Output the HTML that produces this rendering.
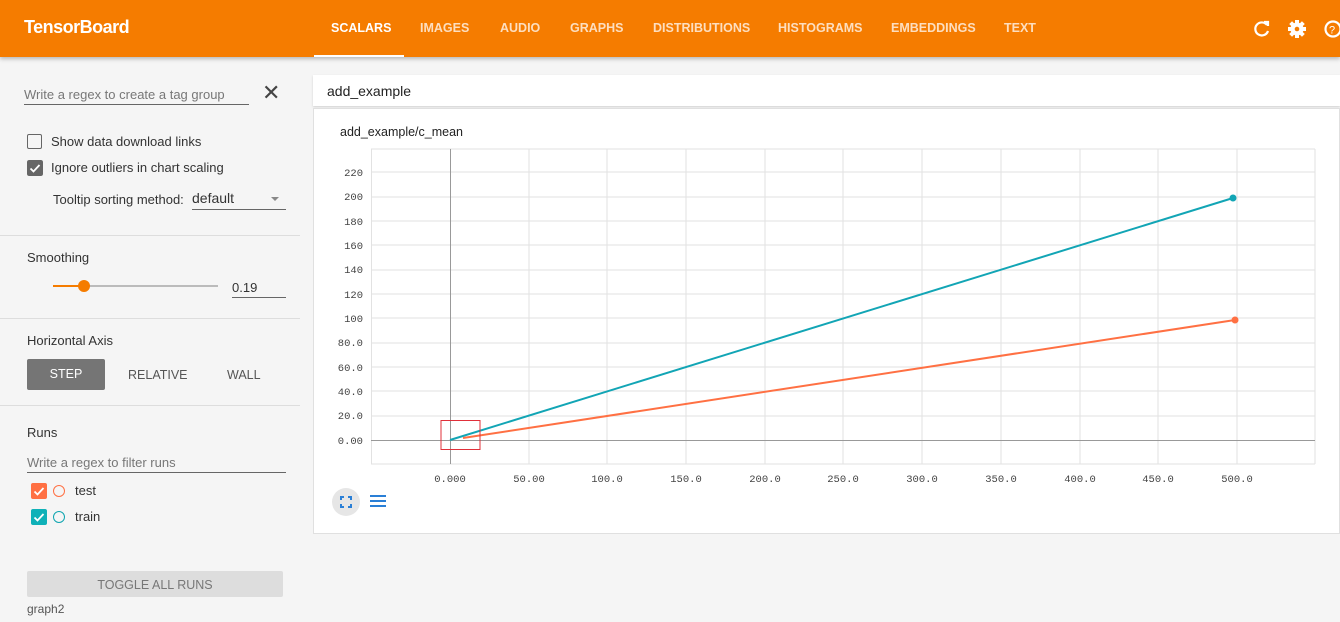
<!DOCTYPE html>
<html><head><meta charset="utf-8"><style>
body{margin:0;width:1340px;height:622px;overflow:hidden;background:#f5f5f5;font-family:"Liberation Sans",sans-serif;position:relative}
.hdr{position:absolute;left:0;top:0;width:1340px;height:57px;background:#f57c00;box-shadow:0 2px 4px rgba(0,0,0,.25)}
.hdr .t{position:absolute;left:24px;top:17px;color:#fff;font-size:18px;font-weight:bold;letter-spacing:-.5px}
.tab{position:absolute;top:21px;color:rgba(255,255,255,.75);font-size:12.5px;font-weight:bold}
.a{position:absolute;color:#333;font-size:13px}
.line{position:absolute;left:0;width:300px;height:1px;background:#ddd}
.cb{position:absolute;width:15px;height:15px;border-radius:2px}
</style></head><body>
<div class="hdr"><div class="t">TensorBoard</div>
<div class="tab" style="left:331px;color:#fff">SCALARS</div>
<div style="position:absolute;left:314px;top:55px;width:90px;height:2px;background:#fff"></div>
<div class="tab" style="left:420px">IMAGES</div><div class="tab" style="left:500px">AUDIO</div>
<div class="tab" style="left:570px">GRAPHS</div><div class="tab" style="left:653px">DISTRIBUTIONS</div>
<div class="tab" style="left:778px">HISTOGRAMS</div><div class="tab" style="left:891px">EMBEDDINGS</div>
<div class="tab" style="left:1004px">TEXT</div>
<svg style="position:absolute;left:1250px;top:17px" width="90" height="24" viewBox="0 0 90 24" fill="none" stroke="#fff" stroke-width="2.2">
<path d="M17 8 A6.5 6.5 0 1 0 18 14"/><path d="M14 5h4v4" fill="#fff"/>
<g fill="#fff" stroke="none"><rect x="45" y="3" width="4" height="18"/><rect x="45" y="3" width="4" height="18" transform="rotate(45 47 12)"/><rect x="45" y="3" width="4" height="18" transform="rotate(90 47 12)"/><rect x="45" y="3" width="4" height="18" transform="rotate(135 47 12)"/><circle cx="47" cy="12" r="6.5"/></g>
<circle cx="47" cy="12" r="2.3" fill="#f57c00" stroke="none"/>
<circle cx="83" cy="12" r="7.5"/><text x="79" y="16.5" font-size="11" fill="#fff" stroke="none" font-family="Liberation Sans">?</text>
</svg></div>

<div class="a" style="left:24px;top:87px;color:#777">Write a regex to create a tag group</div>
<div style="position:absolute;left:24px;top:104px;width:225px;height:1px;background:#666"></div>
<div class="a" style="left:262px;top:80px;font-size:22px;color:#444">✕</div>
<div class="cb" style="left:27px;top:134px;border:1.5px solid #666;width:13px;height:13px"></div>
<div class="a" style="left:51px;top:134px">Show data download links</div>
<svg class="cb" style="left:27px;top:160px;width:16px;height:16px" viewBox="0 0 16 16"><rect width="16" height="16" rx="2" fill="#666"/><path d="M3.5 8.5l3 3 6-6.5" stroke="#fff" stroke-width="1.8" fill="none"/></svg>
<div class="a" style="left:51px;top:160px">Ignore outliers in chart scaling</div>
<div class="a" style="left:53px;top:192px">Tooltip sorting method:</div>
<div class="a" style="left:192px;top:190px;font-size:14px">default</div>
<div style="position:absolute;left:271px;top:197px;border:4px solid transparent;border-top-color:#888"></div>
<div style="position:absolute;left:192px;top:209px;width:94px;height:1px;background:#666"></div>
<div class="line" style="top:235px"></div>
<div class="a" style="left:27px;top:250px">Smoothing</div>
<div style="position:absolute;left:53px;top:285px;width:30px;height:2px;background:#f57c00"></div>
<div style="position:absolute;left:83px;top:285px;width:135px;height:2px;background:#bbb"></div>
<div style="position:absolute;left:78px;top:280px;width:12px;height:12px;border-radius:50%;background:#f57c00"></div>
<div class="a" style="left:232px;top:280px">0.19</div>
<div style="position:absolute;left:232px;top:297px;width:54px;height:1px;background:#666"></div>
<div class="line" style="top:318px"></div>
<div class="a" style="left:27px;top:333px">Horizontal Axis</div>
<div style="position:absolute;left:27px;top:359px;width:78px;height:31px;background:#757575;border-radius:2px;color:#fff;font-size:12.5px;text-align:center;line-height:31px">STEP</div>
<div class="a" style="left:128px;top:368px;font-size:12.5px;color:#555">RELATIVE</div>
<div class="a" style="left:227px;top:368px;font-size:12.5px;color:#555">WALL</div>
<div class="line" style="top:405px"></div>
<div class="a" style="left:27px;top:425px">Runs</div>
<div class="a" style="left:27px;top:455px;color:#777">Write a regex to filter runs</div>
<div style="position:absolute;left:27px;top:472px;width:259px;height:1px;background:#666"></div>
<svg class="cb" style="left:31px;top:483px;width:16px;height:16px" viewBox="0 0 16 16"><rect width="16" height="16" rx="1" fill="#ff7043"/><path d="M3.5 8.5l3 3 6-6.5" stroke="#fff" stroke-width="1.8" fill="none"/></svg>
<div style="position:absolute;left:53px;top:485px;width:10px;height:10px;border:1.5px solid #ff7043;border-radius:50%"></div>
<div class="a" style="left:75px;top:483px">test</div>
<svg class="cb" style="left:31px;top:509px;width:16px;height:16px" viewBox="0 0 16 16"><rect width="16" height="16" rx="1" fill="#0fb1b8"/><path d="M3.5 8.5l3 3 6-6.5" stroke="#fff" stroke-width="1.8" fill="none"/></svg>
<div style="position:absolute;left:53px;top:511px;width:10px;height:10px;border:1.5px solid #0fa5b0;border-radius:50%"></div>
<div class="a" style="left:75px;top:509px">train</div>
<div style="position:absolute;left:27px;top:571px;width:256px;height:26px;background:#ddd;border-radius:2px;color:#777;font-size:12.5px;text-align:center;line-height:28px">TOGGLE ALL RUNS</div>
<div class="a" style="left:27px;top:602px;font-size:12px;color:#555">graph2</div>

<div style="position:absolute;left:313px;top:75px;width:1027px;height:31px;background:#fff;box-shadow:0 1px 2px rgba(0,0,0,.15)"></div>
<div class="a" style="left:327px;top:83px;font-size:14px;color:#222">add_example</div>
<div style="position:absolute;left:313px;top:108px;width:1027px;height:426px;background:#fff;border:1px solid #e0e0e0;box-sizing:border-box"></div>
<div class="a" style="left:340px;top:125px;font-size:12.5px;color:#222">add_example/c_mean</div>
<svg style="position:absolute;left:0;top:0" width="1340" height="622">
<g stroke="#e2e2e2" stroke-width="1">
<line x1="371" y1="149" x2="1315" y2="149"/><line x1="371" y1="464" x2="1315" y2="464"/>
<line x1="371" y1="172" x2="1315" y2="172"/><line x1="371" y1="197" x2="1315" y2="197"/><line x1="371" y1="221" x2="1315" y2="221"/><line x1="371" y1="245" x2="1315" y2="245"/><line x1="371" y1="270" x2="1315" y2="270"/><line x1="371" y1="294" x2="1315" y2="294"/><line x1="371" y1="318" x2="1315" y2="318"/><line x1="371" y1="343" x2="1315" y2="343"/><line x1="371" y1="367" x2="1315" y2="367"/><line x1="371" y1="391" x2="1315" y2="391"/><line x1="371" y1="416" x2="1315" y2="416"/>
<line x1="371.5" y1="149" x2="371.5" y2="464"/><line x1="529" y1="149" x2="529" y2="464"/><line x1="607" y1="149" x2="607" y2="464"/><line x1="686" y1="149" x2="686" y2="464"/><line x1="765" y1="149" x2="765" y2="464"/><line x1="843" y1="149" x2="843" y2="464"/><line x1="922" y1="149" x2="922" y2="464"/><line x1="1001" y1="149" x2="1001" y2="464"/><line x1="1080" y1="149" x2="1080" y2="464"/><line x1="1158" y1="149" x2="1158" y2="464"/><line x1="1237" y1="149" x2="1237" y2="464"/><line x1="1315" y1="149" x2="1315" y2="464"/>
</g>
<line x1="450.5" y1="149" x2="450.5" y2="464" stroke="#999"/>
<line x1="371" y1="440.5" x2="1315" y2="440.5" stroke="#999"/>
<g font-family="Liberation Mono,monospace" font-size="10.5" fill="#444" text-anchor="end">
<text x="363" y="176">220</text><text x="363" y="200">200</text><text x="363" y="225">180</text><text x="363" y="249">160</text><text x="363" y="273">140</text><text x="363" y="298">120</text><text x="363" y="322">100</text><text x="363" y="346">80.0</text><text x="363" y="371">60.0</text><text x="363" y="395">40.0</text><text x="363" y="419">20.0</text><text x="363" y="444">0.00</text></g>
<g font-family="Liberation Mono,monospace" font-size="10.5" fill="#444" text-anchor="middle">
<text x="450" y="482">0.000</text><text x="529" y="482">50.00</text><text x="607" y="482">100.0</text><text x="686" y="482">150.0</text><text x="765" y="482">200.0</text><text x="843" y="482">250.0</text><text x="922" y="482">300.0</text><text x="1001" y="482">350.0</text><text x="1080" y="482">400.0</text><text x="1158" y="482">450.0</text><text x="1237" y="482">500.0</text></g>
<line x1="463" y1="438" x2="1235" y2="320" stroke="#ff7043" stroke-width="2"/>
<line x1="450" y1="440" x2="1233" y2="198" stroke="#12a5b5" stroke-width="2"/>
<circle cx="1235" cy="320" r="3.5" fill="#ff7043"/><circle cx="1233" cy="198" r="3.5" fill="#12a5b5"/>
<rect x="441" y="420.5" width="39" height="29" fill="none" stroke="#e0303a" stroke-width="1"/>
<circle cx="346" cy="502" r="14" fill="#e6e6e6"/>
<path d="M341 500v-3h3M348 497h3v3M351 504v3h-3M344 507h-3v-3" stroke="#2a7fd6" stroke-width="2" fill="none"/>
<g stroke="#2a7fd6" stroke-width="2"><line x1="370" y1="496" x2="386" y2="496"/><line x1="370" y1="501" x2="386" y2="501"/><line x1="370" y1="506" x2="386" y2="506"/></g>
</svg>
</body></html>
